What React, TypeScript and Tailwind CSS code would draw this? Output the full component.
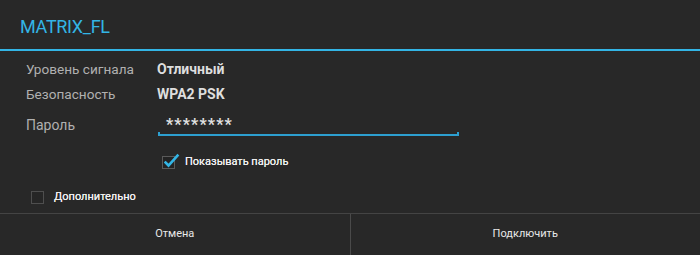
import { ReactNode } from 'react';

function InfoRow({ label, children }: { label: string; children: ReactNode }) {
  return (
    <div className="flex h-[25px] leading-[25px] text-[14px]">
      <div className="w-[131px] text-[13.6px] text-[#b0b0b0]">{label}</div>
      <div className="font-bold text-[#dedede]">{children}</div>
    </div>
  );
}

function CheckedBox() {
  return (
    <div className="relative w-[13px] h-[13px] border border-[#5a5a5a] bg-[#232323]">
      <svg className="absolute -top-[4px] left-[1px]" width="16" height="16" viewBox="0 0 16 16">
        <path d="M1.5 9.5 L4.5 12.5 L13.5 2.5" fill="none" stroke="#33b5e5" strokeWidth="2.6" strokeLinecap="square" />
      </svg>
    </div>
  );
}

export default function App() {
  return (
    <div
      className="w-[700px] h-[255px] bg-[#282828] flex flex-col text-white"
      style={{ fontFamily: 'Roboto, "Noto Sans", sans-serif' }}
    >
      <div className="h-[49px] flex items-center pl-[20px] pt-[3px] text-[18px] tracking-[-0.3px] text-[#33b5e5]">MATRIX_FL</div>
      <div className="h-[2px] bg-[#33b5e5]" />

      <div className="flex-1 flex flex-col pl-[26px] pt-[6px]">
        <InfoRow label="Уровень сигнала">Отличный</InfoRow>
        <InfoRow label="Безопасность">WPA2 PSK</InfoRow>

        <div className="flex h-[30px] text-[14px]">
          <div className="w-[132px] pt-[6px] leading-[25px] text-[#b0b0b0]">Пароль</div>
          <div className="relative w-[301px] h-[29px] border-b-2 border-[#2d9fd0] pl-[8px] pt-[8px] text-[16px] font-bold leading-[20px] tracking-[1.1px] text-[#e0e0e0]">
            ********
            <span className="absolute left-0 -bottom-[2px] w-[2px] h-[4px] bg-[#2d9fd0]" />
            <span className="absolute right-0 -bottom-[2px] w-[2px] h-[4px] bg-[#2d9fd0]" />
          </div>
        </div>

        <div className="flex items-center h-[26px] mt-[12px] pl-[136px] gap-[10px]">
          <CheckedBox />
          <span className="text-[11px] text-[#f0f0f0] [text-shadow:0_0_0.5px_#f0f0f0]">Показывать пароль</span>
        </div>

        <div className="flex items-center h-[25px] mt-[10px] pl-[5px] gap-[10px]">
          <div className="w-[13px] h-[13px] border border-[#4e4e4e] bg-[#262626]" />
          <span className="text-[11px] text-[#f0f0f0] [text-shadow:0_0_0.5px_#f0f0f0]">Дополнительно</span>
        </div>
      </div>

      <div className="h-[42px] flex border-t border-[#444444]">
        <button className="flex-1 flex items-center justify-center text-[11px] text-[#e8e8e8]">Отмена</button>
        <div className="w-px bg-[#4a4a4a]" />
        <button className="flex-1 flex items-center justify-center text-[11px] text-[#e8e8e8]">Подключить</button>
      </div>
    </div>
  );
}
